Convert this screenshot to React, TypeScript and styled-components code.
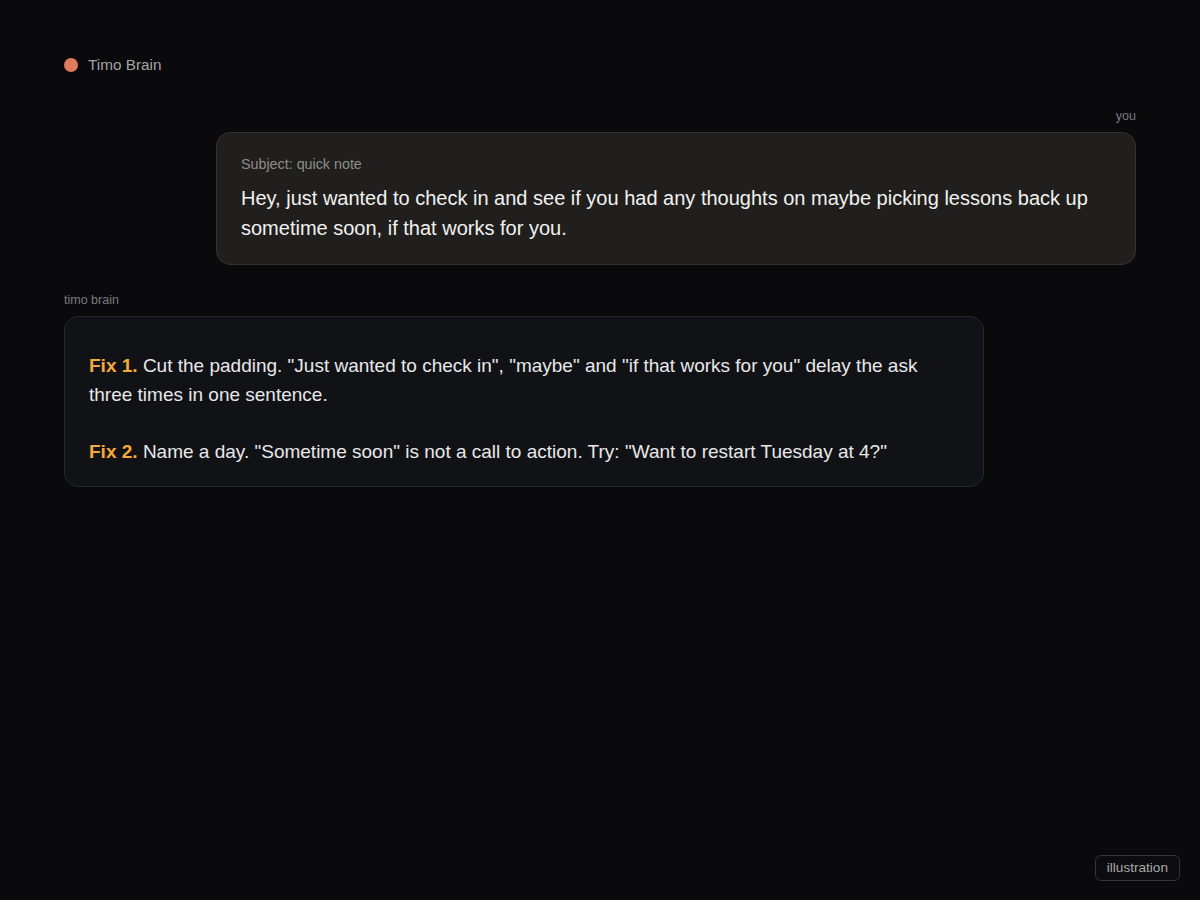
import React from "react";
import styled, { createGlobalStyle } from "styled-components";

const Global = createGlobalStyle`
  html, body { margin: 0; padding: 0; background: #0a0a0c; }
  body { font-family: "Liberation Sans", Arial, sans-serif; color: #ececec; }
  #root { min-height: 900px; }
`;

const Page = styled.div`
  min-height: 900px;
  box-sizing: border-box;
  padding: 56px 64px 40px;
  display: flex;
  flex-direction: column;
`;

const Header = styled.div`
  display: flex;
  align-items: center;
  gap: 10px;
  height: 18px;
`;

const Dot = styled.span`
  width: 14px;
  height: 14px;
  border-radius: 50%;
  background: #e07b5b;
`;

const Brand = styled.span`
  font-size: 15.3px;
  color: #a3a3a6;
`;

const Thread = styled.div`
  display: flex;
  flex-direction: column;
  margin-top: 35px;
`;

const Message = styled.div<{ $side: "left" | "right" }>`
  display: flex;
  flex-direction: column;
  align-items: ${(p) => (p.$side === "right" ? "flex-end" : "flex-start")};
  margin-bottom: 28px;
`;

const Label = styled.div`
  font-size: 12.5px;
  line-height: 14px;
  color: #7a7a7e;
  margin-bottom: 9px;
`;

const Bubble = styled.div<{ $variant: "user" | "bot" }>`
  width: 920px;
  box-sizing: border-box;
  border-radius: 14px;
  border: 1px solid ${(p) => (p.$variant === "user" ? "#34322f" : "#26272c")};
  background: ${(p) => (p.$variant === "user" ? "#201f1d" : "#111216")};
  padding: ${(p) => (p.$variant === "user" ? "21px 24px 21px" : "35px 24px 20px")};
`;

const Subject = styled.div`
  font-size: 14.3px;
  line-height: 20px;
  color: #8e8c88;
  margin-bottom: 9px;
`;

const Body = styled.div`
  font-size: 20px;
  line-height: 30px;
  color: #f2f1ef;
`;

const Para = styled.p`
  margin: 0 0 28.5px;
  font-size: 19px;
  line-height: 28.5px;
  color: #e8e8ea;
  &:last-child { margin-bottom: 0; }
`;

const Fix = styled.strong`
  color: #f4a93c;
  font-weight: 700;
  margin-right: 0.28em;
`;

const Tag = styled.div`
  position: fixed;
  right: 20px;
  bottom: 19px;
  font-size: 13.6px;
  line-height: 16px;
  color: #a9a9ad;
  border: 1px solid #35353a;
  border-radius: 6px;
  padding: 4px 11px 4px 11px;
  background: #0c0c0e;
`;

export default function App() {
  return (
    <>
      <Global />
      <Page>
        <Header>
          <Dot />
          <Brand>Timo Brain</Brand>
        </Header>
        <Thread>
          <Message $side="right">
            <Label>you</Label>
            <Bubble $variant="user">
              <Subject>Subject: quick note</Subject>
              <Body>
                Hey, just wanted to check in and see if you had any thoughts on maybe picking lessons back up
                sometime soon, if that works for you.
              </Body>
            </Bubble>
          </Message>
          <Message $side="left">
            <Label>timo brain</Label>
            <Bubble $variant="bot">
              <Para>
                <Fix>Fix 1.</Fix>Cut the padding. "Just wanted to check in", "maybe" and "if that works for you" delay the ask three times in one sentence.
              </Para>
              <Para>
                <Fix>Fix 2.</Fix>Name a day. "Sometime soon" is not a call to action. Try: "Want to restart Tuesday at 4?"
              </Para>
            </Bubble>
          </Message>
        </Thread>
      </Page>
      <Tag>illustration</Tag>
    </>
  );
}
